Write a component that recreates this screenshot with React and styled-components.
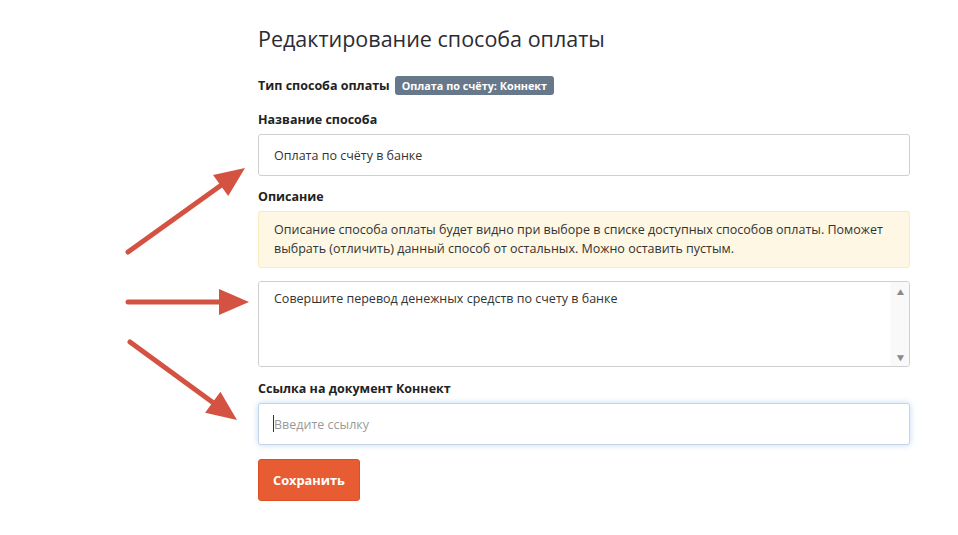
import React from 'react'
import styled, { createGlobalStyle } from 'styled-components';

const GlobalStyle = createGlobalStyle`
  html, body {
    margin: 0;
    padding: 0;
    background: #fff;
  }
  body {
    font-family: "Open Sans", "Noto Sans", sans-serif;
    color: #222;
  }
`;

const Page = styled.div`
  position: relative;
  width: 958px;
  height: 535px;
  overflow: hidden;
  background: #fff;
`;

const Form = styled.div`
  width: 652px;
  margin-left: 258px;
  padding-top: 23px;
  display: flex;
  flex-direction: column;
`;

const Title = styled.h1`
  margin: 0 0 21px;
  font-size: 21.5px;
  font-weight: 400;
  color: #2b2b33;
  line-height: 32px;
`;

const TypeRow = styled.div`
  display: flex;
  align-items: center;
  gap: 5px;
  margin-bottom: 16px;
`;

const Label = styled.div`
  font-size: 12.5px;
  font-weight: 700;
  color: #222;
  line-height: 18px;
  margin-bottom: ${({ $mb }) => $mb ?? 5}px;
`;

const Badge = styled.span`
  display: inline-block;
  background: #67788a;
  color: #fff;
  font-size: 10.8px;
  font-weight: 700;
  line-height: 14px;
  padding: 3px 7px 2px;
  border-radius: 3px;
`;

const Input = styled.input`
  box-sizing: border-box;
  width: 100%;
  height: 42px;
  padding: 0 15px;
  border: 1px solid ${({ $focus }) => ($focus ? '#c5d6ea' : '#cfcfcf')};
  border-radius: 3px;
  box-shadow: ${({ $focus }) => ($focus ? '0 0 6px rgba(120,170,230,0.45)' : 'none')};
  font-family: inherit;
  font-size: 12.5px;
  color: #333;
  outline: none;
  margin-bottom: ${({ $mb }) => $mb ?? 12}px;
  &::placeholder {
    color: #9a9a9a;
  }
`;

const Alert = styled.div`
  box-sizing: border-box;
  background: #fdf7e4;
  border: 1px solid #f7ebc4;
  border-radius: 3px;
  padding: 8px 15px 9px;
  font-size: 12.5px;
  line-height: 19px;
  color: #333;
  margin-bottom: 13px;
`;

const AreaBox = styled.div`
  box-sizing: border-box;
  display: flex;
  height: 86px;
  border: 1px solid #cfcfcf;
  border-radius: 3px;
  margin-bottom: 13px;
  overflow: hidden;
`;

const TextArea = styled.textarea`
  flex: 1;
  border: none;
  resize: none;
  outline: none;
  overflow: hidden;
  padding: 8px 15px;
  font-family: inherit;
  font-size: 12.5px;
  line-height: 18px;
  color: #333;
`;

const ScrollTrack = styled.div`
  width: 17px;
  background: #f9f9f9;
  display: flex;
  flex-direction: column;
  justify-content: space-between;
  align-items: center;
  padding: 3px 0 3px;
  color: #8a8a8a;
  font-size: 10px;
  line-height: 12px;
  transform: scaleX(1.2);
`;

const Caret = styled.span`
  position: absolute;
  left: 15px;
  top: 12px;
  width: 1px;
  height: 17px;
  background: #333;
`;

const InputWrap = styled.div`
  position: relative;
`;

const Button = styled.button`
  align-self: flex-start;
  height: 42px;
  padding: 0 14px;
  background: #e85c34;
  border: 1px solid #dc5027;
  border-radius: 3px;
  color: #fff;
  font-family: inherit;
  font-size: 12.8px;
  font-weight: 700;
  cursor: pointer;
`;

const Arrows = styled.svg`
  position: absolute;
  left: 0;
  top: 0;
  pointer-events: none;
`;

const Arrow = ({ x1, y1, x2, y2 }) => {
  const ang = Math.atan2(y2 - y1, x2 - x1);
  const len = 30;
  const half = 13;
  const bx = x2 - Math.cos(ang) * len;
  const by = y2 - Math.sin(ang) * len;
  const nx = -Math.sin(ang);
  const ny = Math.cos(ang);
  const sx = x2 - Math.cos(ang) * (len - 4);
  const sy = y2 - Math.sin(ang) * (len - 4);
  return (
    <g>
      <line x1={x1} y1={y1} x2={sx} y2={sy} stroke="#d45242" strokeWidth="5" strokeLinecap="round" />
      <polygon
        points={`${x2},${y2} ${bx + nx * half},${by + ny * half} ${bx - nx * half},${by - ny * half}`}
        fill="#d45242"
      />
    </g>
  );
};

const App = () => {
  return (
    <Page>
      <GlobalStyle />
      <Form>
        <Title>Редактирование способа оплаты</Title>
        <TypeRow>
          <Label $mb={0}>Тип способа оплаты</Label>
          <Badge>Оплата по счёту: Коннект</Badge>
        </TypeRow>

        <Label>Название способа</Label>
        <Input defaultValue="Оплата по счёту в банке" />

        <Label>Описание</Label>
        <Alert>
          Описание способа оплаты будет видно при выборе в списке доступных способов оплаты. Поможет
          выбрать (отличить) данный способ от остальных. Можно оставить пустым.
        </Alert>
        <AreaBox>
          <TextArea defaultValue="Совершите перевод денежных средств по счету в банке" />
          <ScrollTrack>
            <span>▲</span>
            <span>▼</span>
          </ScrollTrack>
        </AreaBox>

        <Label>Ссылка на документ Коннект</Label>
        <InputWrap>
          <Input $focus $mb={14} placeholder="Введите ссылку" />
          <Caret />
        </InputWrap>

        <Button>Сохранить</Button>
      </Form>

      <Arrows width="958" height="535">
        <Arrow x1={128} y1={252} x2={245} y2={168} />
        <Arrow x1={128} y1={302} x2={249} y2={302} />
        <Arrow x1={130} y1={342} x2={237} y2={420} />
      </Arrows>
    </Page>
  )
}
export default App
